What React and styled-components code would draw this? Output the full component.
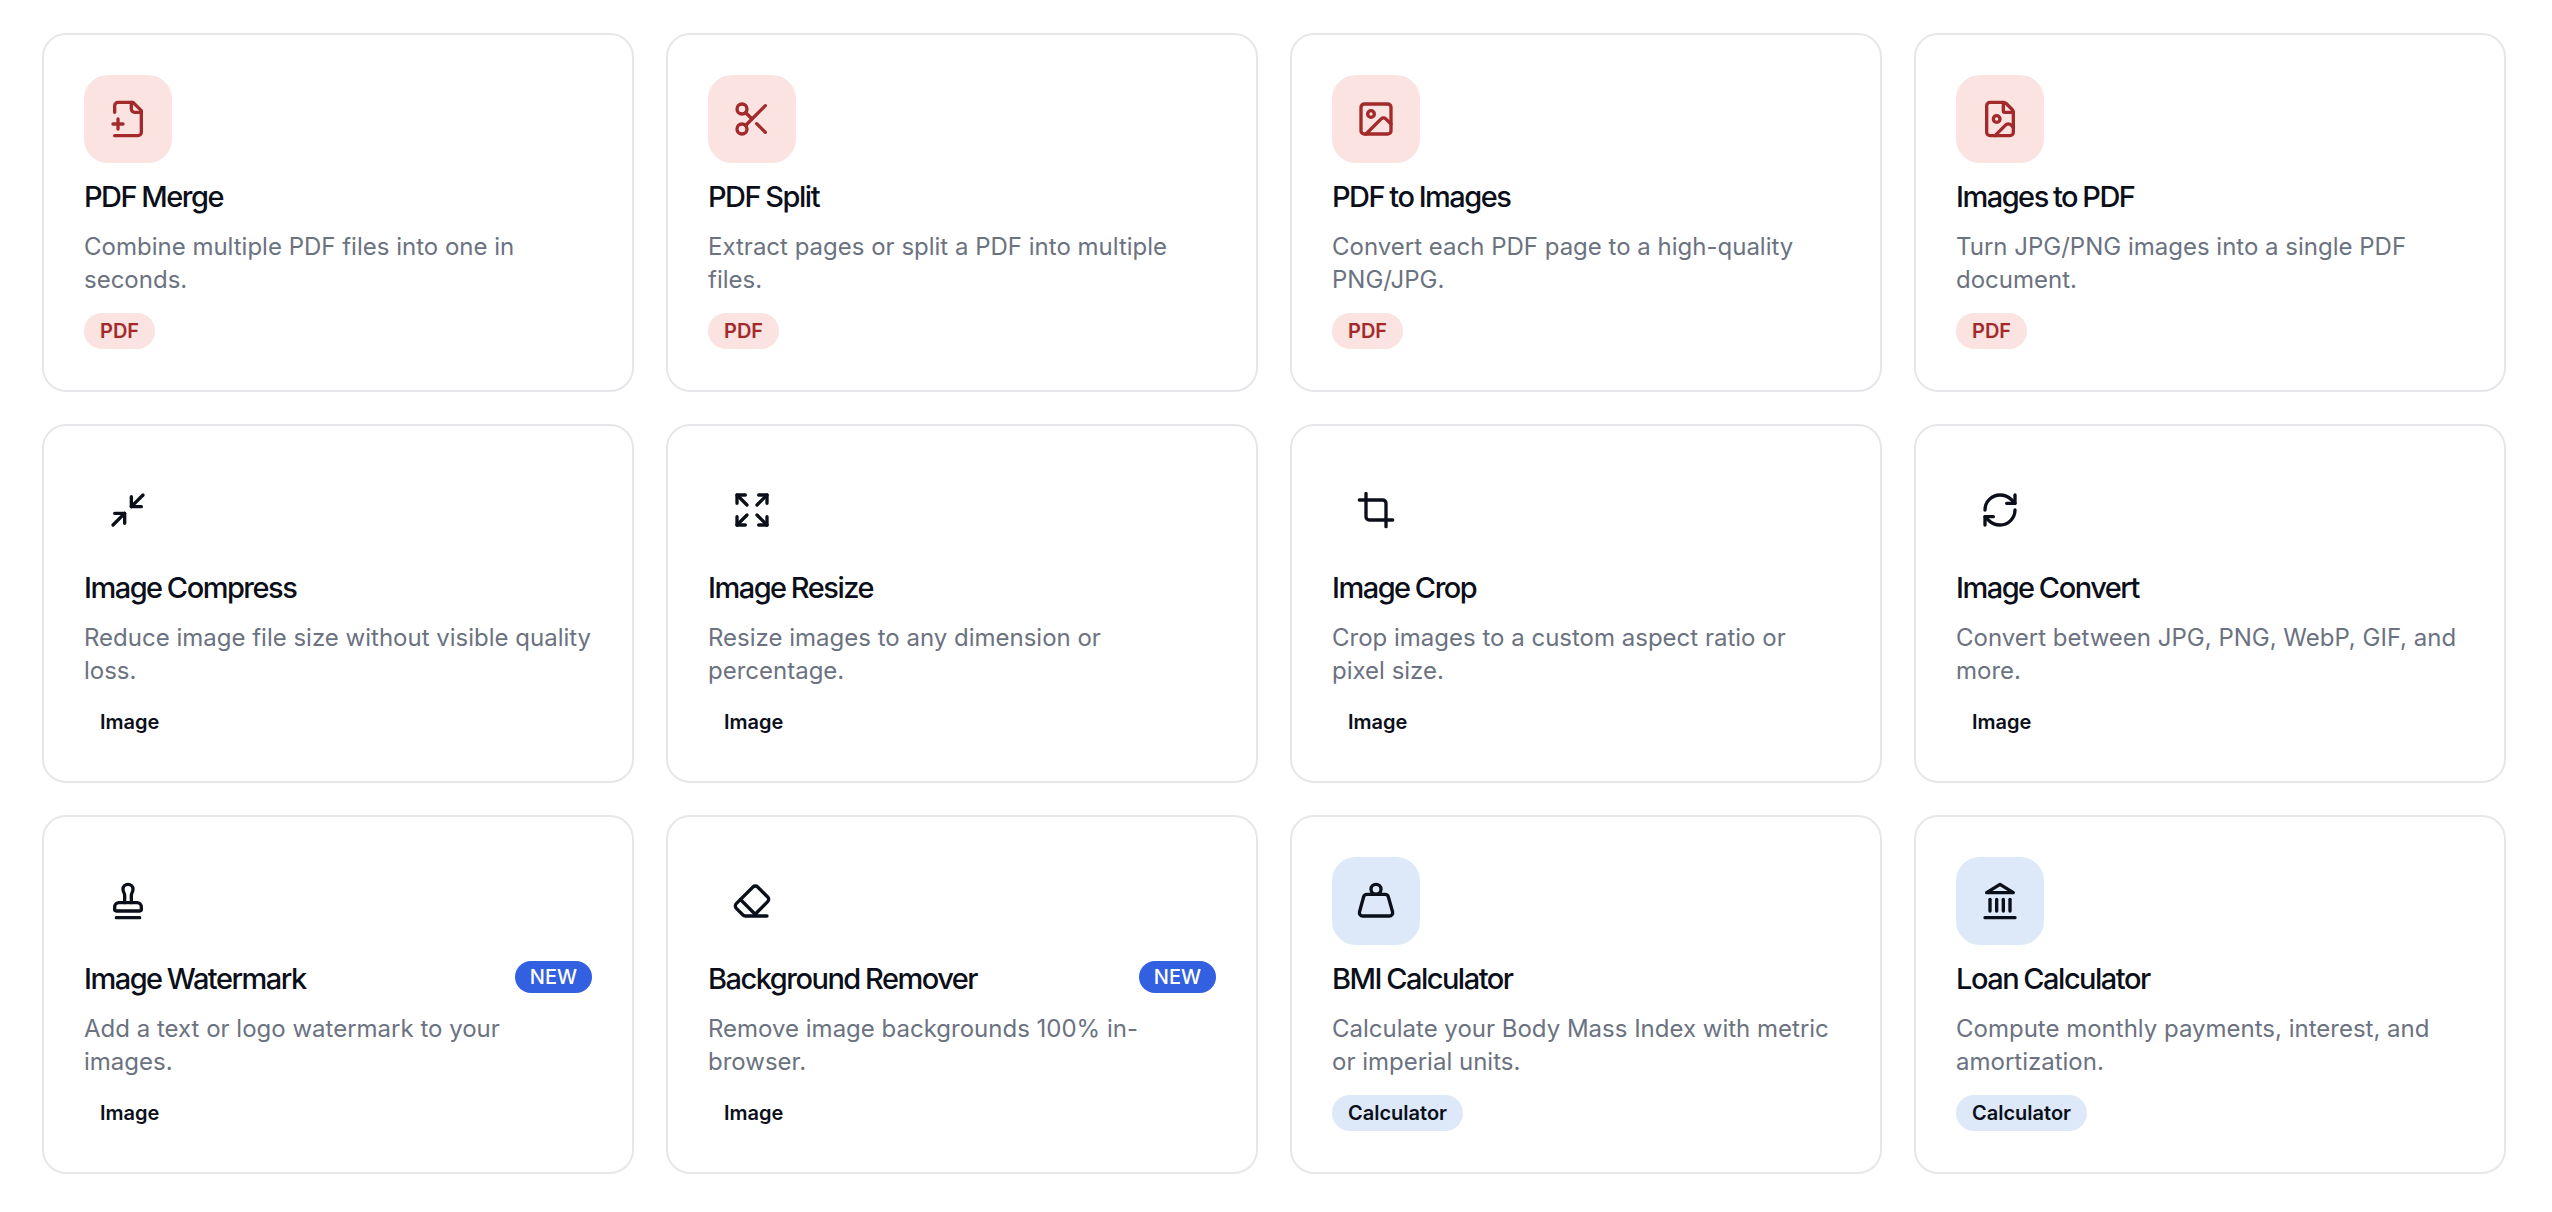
import styled, { createGlobalStyle } from "styled-components";
import { Scissors, Image, FileImage, Minimize2, Expand, Crop, RefreshCw, Stamp, Eraser, Weight } from "lucide-react";

const RED = { bg: "#fae3e1", fg: "#a32a2a" };
const BLUE = { bg: "#dde8f8", fg: "#0b0f19" };
const PLAIN = { bg: "transparent", fg: "#0b0f19" };

const FileMergeIcon = ({ size }) => (
  <svg width={size} height={size} viewBox="0 0 24 24" fill="none" stroke="currentColor" strokeWidth="2" strokeLinecap="round" strokeLinejoin="round">
    <path d="M4 22h14a2 2 0 0 0 2-2V7l-5-5H6a2 2 0 0 0-2 2v4" />
    <path d="M14 2v4a2 2 0 0 0 2 2h4" />
    <path d="M3 15h6" />
    <path d="M6 12v6" />
  </svg>
);

const BankIcon = ({ size }) => (
  <svg width={size} height={size} viewBox="0 0 24 24" fill="none" stroke="currentColor" strokeWidth="2" strokeLinecap="round" strokeLinejoin="round">
    <path d="M3 22h18" />
    <path d="M6 18v-7" />
    <path d="M10 18v-7" />
    <path d="M14 18v-7" />
    <path d="M18 18v-7" />
    <path d="M12 2l8 5H4z" />
  </svg>
);

const tools = [
  { title: "PDF Merge", desc: "Combine multiple PDF files into one in seconds.", tag: "PDF", tone: RED, Icon: FileMergeIcon },
  { title: "PDF Split", desc: "Extract pages or split a PDF into multiple files.", tag: "PDF", tone: RED, Icon: Scissors },
  { title: "PDF to Images", desc: "Convert each PDF page to a high-quality PNG/JPG.", tag: "PDF", tone: RED, Icon: Image },
  { title: "Images to PDF", desc: "Turn JPG/PNG images into a single PDF document.", tag: "PDF", tone: RED, Icon: FileImage },
  { title: "Image Compress", desc: "Reduce image file size without visible quality loss.", tag: "Image", tone: PLAIN, Icon: Minimize2 },
  { title: "Image Resize", desc: "Resize images to any dimension or percentage.", tag: "Image", tone: PLAIN, Icon: Expand },
  { title: "Image Crop", desc: "Crop images to a custom aspect ratio or pixel size.", tag: "Image", tone: PLAIN, Icon: Crop },
  { title: "Image Convert", desc: "Convert between JPG, PNG, WebP, GIF, and more.", tag: "Image", tone: PLAIN, Icon: RefreshCw },
  { title: "Image Watermark", desc: "Add a text or logo watermark to your images.", tag: "Image", tone: PLAIN, Icon: Stamp, isNew: true },
  { title: "Background Remover", desc: "Remove image backgrounds 100% in-browser.", tag: "Image", tone: PLAIN, Icon: Eraser, isNew: true },
  { title: "BMI Calculator", desc: "Calculate your Body Mass Index with metric or imperial units.", tag: "Calculator", tone: BLUE, Icon: Weight },
  { title: "Loan Calculator", desc: "Compute monthly payments, interest, and amortization.", tag: "Calculator", tone: BLUE, Icon: BankIcon },
];

export default function App() {
  return (
    <>
      <GlobalStyle />
      <Grid>
        {tools.map(({ title, desc, tag, tone, Icon, isNew }) => (
          <Card key={title}>
            <IconBox $bg={tone.bg} $fg={tone.fg}>
              <Icon size={40} />
            </IconBox>
            <TitleRow>
              <Title>{title}</Title>
              {isNew && <NewBadge>NEW</NewBadge>}
            </TitleRow>
            <Desc>{desc}</Desc>
            <Tag $bg={tone.bg} $fg={tone.fg}>{tag}</Tag>
          </Card>
        ))}
      </Grid>
    </>
  );
}

const GlobalStyle = createGlobalStyle`
  body {
    margin: 0;
    background: #ffffff;
    font-family: Inter, "Liberation Sans", sans-serif;
  }
`;

const Grid = styled.div`
  display: grid;
  grid-template-columns: repeat(4, 592px);
  grid-auto-rows: 359px;
  gap: 32px 32px;
  padding: 33px 0 0 42px;
`;

const Card = styled.div`
  box-sizing: border-box;
  border: 2px solid #e5e7eb;
  border-radius: 24px;
  padding: 40px 40px 0;
  display: flex;
  flex-direction: column;
  align-items: flex-start;
`;

const IconBox = styled.div`
  width: 88px;
  height: 88px;
  border-radius: 24px;
  background: ${(p) => p.$bg};
  color: ${(p) => p.$fg};
  display: flex;
  align-items: center;
  justify-content: center;
`;

const TitleRow = styled.div`
  width: 100%;
  height: 40px;
  margin-top: 12px;
  display: flex;
  align-items: center;
  justify-content: space-between;
`;

const Title = styled.div`
  font-size: 29px;
  font-weight: 500;
  letter-spacing: -1.5px;
  word-spacing: -1px;
  color: #0b0f19;
  padding-top: 2px;
`;

const NewBadge = styled.span`
  background: #3260e0;
  color: #fff;
  font-size: 20px;
  font-weight: 500;
  line-height: 24px;
  padding: 4px 15px;
  border-radius: 999px;
`;

const Desc = styled.p`
  margin: 15px 0 0;
  font-size: 24px;
  line-height: 33px;
  color: #6b7280;
`;

const Tag = styled.span`
  margin-top: 17px;
  background: ${(p) => p.$bg};
  color: ${(p) => p.$fg};
  font-size: 20px;
  font-weight: 600;
  line-height: 24px;
  padding: 6px 16px;
  border-radius: 999px;
`;
